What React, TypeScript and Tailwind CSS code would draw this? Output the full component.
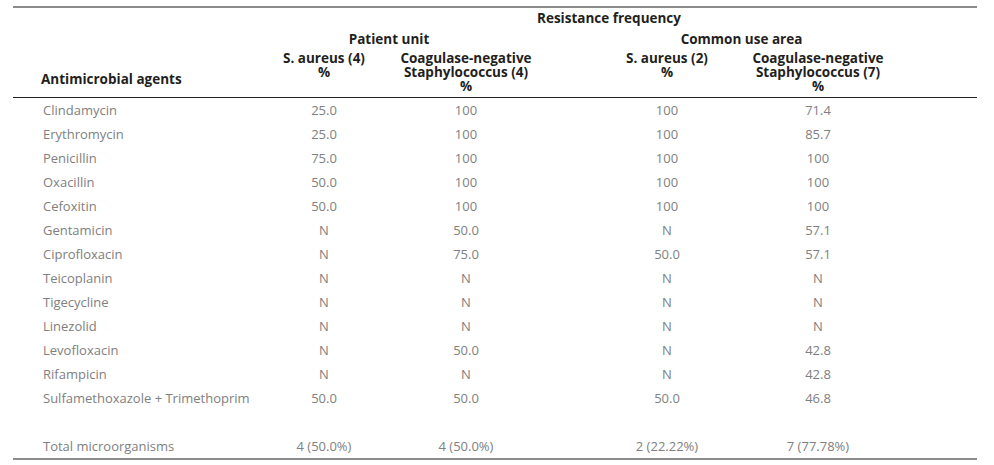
import React from "react";

const rows: [string, string, string, string, string][] = [
  ["Clindamycin", "25.0", "100", "100", "71.4"],
  ["Erythromycin", "25.0", "100", "100", "85.7"],
  ["Penicillin", "75.0", "100", "100", "100"],
  ["Oxacillin", "50.0", "100", "100", "100"],
  ["Cefoxitin", "50.0", "100", "100", "100"],
  ["Gentamicin", "N", "50.0", "N", "57.1"],
  ["Ciprofloxacin", "N", "75.0", "50.0", "57.1"],
  ["Teicoplanin", "N", "N", "N", "N"],
  ["Tigecycline", "N", "N", "N", "N"],
  ["Linezolid", "N", "N", "N", "N"],
  ["Levofloxacin", "N", "50.0", "N", "42.8"],
  ["Rifampicin", "N", "N", "N", "42.8"],
  ["Sulfamethoxazole + Trimethoprim", "50.0", "50.0", "50.0", "46.8"],
];

const grid = "grid grid-cols-[234px_154px_130px_59.5px_153px_149px_84.5px]";

function Row({ cells, className = "" }: { cells: string[]; className?: string }) {
  return (
    <div className={`${grid} h-[24px] items-center pt-[2px] text-[#808080] ${className}`}>
      <div className="pl-[30px] whitespace-nowrap">{cells[0]}</div>
      <div className="text-center">{cells[1]}</div>
      <div className="text-center">{cells[2]}</div>
      <div />
      <div className="text-center">{cells[3]}</div>
      <div className="text-center">{cells[4]}</div>
      <div />
    </div>
  );
}

export default function App() {
  return (
    <div className="w-[994px] h-[465px] bg-white pt-[6px] font-['Open_Sans',sans-serif] text-[13px]">
      <div className="ml-[13px] w-[964px]">
        <div className="h-[2px] bg-[#8c8c8c]" />
        <div className="text-[#231f20] font-bold text-[13.5px] leading-[14px] border-b border-[#231f20] h-[90px]">
          <div className={`${grid} h-[18px] pt-[2px] items-center`}>
            <div />
            <div className="col-span-6 text-center pr-[6px]">Resistance frequency</div>
          </div>
          <div className={`${grid} h-[24px] mt-[1px] items-center`}>
            <div />
            <div className="col-span-2 text-center">Patient unit</div>
            <div />
            <div className="col-span-2 text-center">Common use area</div>
            <div />
          </div>
          <div className={`${grid} whitespace-nowrap`}>
            <div className="pl-[28px] pt-[21px]">Antimicrobial agents</div>
            <div className="flex flex-col items-center">
              <span>S. aureus (4)</span>
              <span>%</span>
            </div>
            <div className="flex flex-col items-center">
              <span>Coagulase-negative</span>
              <span>Staphylococcus (4)</span>
              <span>%</span>
            </div>
            <div />
            <div className="flex flex-col items-center">
              <span>S. aureus (2)</span>
              <span>%</span>
            </div>
            <div className="flex flex-col items-center">
              <span>Coagulase-negative</span>
              <span>Staphylococcus (7)</span>
              <span>%</span>
            </div>
            <div />
          </div>
        </div>
        {rows.map((r) => (
          <Row key={r[0]} cells={r} />
        ))}
        <Row cells={["Total microorganisms", "4 (50.0%)", "4 (50.0%)", "2 (22.22%)", "7 (77.78%)"]} className="mt-[24px]" />
        <div className="h-[2px] bg-[#8c8c8c]" />
      </div>
    </div>
  );
}
